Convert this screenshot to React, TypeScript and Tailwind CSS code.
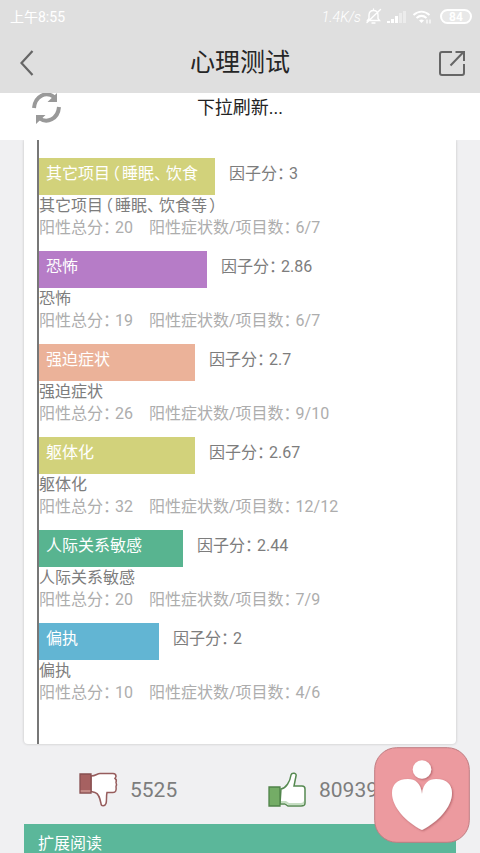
import React from "react";

type Factor = {
  label: string;
  name: string;
  score: string;
  total: number;
  ratio: string;
  bar: string;
};

const factors: Factor[] = [
  { label: "其它项目（睡眠、饮食", name: "其它项目（睡眠、饮食等）", score: "3", total: 20, ratio: "6/7", bar: "w-44 bg-[#d2d27b]" },
  { label: "恐怖", name: "恐怖", score: "2.86", total: 19, ratio: "6/7", bar: "w-[168px] bg-[#b67cc7]" },
  { label: "强迫症状", name: "强迫症状", score: "2.7", total: 26, ratio: "9/10", bar: "w-[156px] bg-[#ebb299]" },
  { label: "躯体化", name: "躯体化", score: "2.67", total: 32, ratio: "12/12", bar: "w-[156px] bg-[#d2d27b]" },
  { label: "人际关系敏感", name: "人际关系敏感", score: "2.44", total: 20, ratio: "7/9", bar: "w-36 bg-[#58b490]" },
  { label: "偏执", name: "偏执", score: "2", total: 10, ratio: "4/6", bar: "w-30 bg-[#62b5d3]" },
];

/** Sets full-width punctuation in a narrow cell so it sits close to its neighbours. */
function Txt({ children }: { children: string }) {
  return (
    <>
      {children.split(/([（）、：])/).map((part, i) =>
        /^[（）、：]$/.test(part) ? (
          <span
            key={i}
            className={`inline-block w-3 [font-feature-settings:'halt'] ${/[（）]/.test(part) ? "text-center" : "text-left"}`}
          >
            {part}
          </span>
        ) : (
          part
        ),
      )}
    </>
  );
}

function StatusBar() {
  return (
    <div className="flex h-[33px] items-center justify-between pl-[10px] pr-2 text-[14px] leading-5 text-white">
      <span>上午8:55</span>
      <div className="flex items-center gap-1">
        <span className="font-light italic">1.4K/s</span>
        <svg width="17" height="17" viewBox="0 0 17 17" fill="none" stroke="white" strokeWidth="1.4" strokeLinecap="round">
          <path d="M2.5 12.5h12l-1.500-2V7c0-3-2-4.500-4.500-4.500S4 4 4 7v3.500zM8.500 2.500V1M7 15h3M15.500 1.500 2 14.500" />
        </svg>
        <svg width="22" height="14" viewBox="0 0 22 14" fill="white">
          <path d="M1 11h3v2H1zM5 9h3v4H5zM9 6h3v7H9z" />
          <path d="M13 3h3v10h-3zM17 1h3v12h-3z" opacity=".4" />
        </svg>
        <svg width="20" height="16" viewBox="0 0 20 16" fill="none" stroke="white" strokeWidth="2">
          <path d="M1.500 6c5-4.500 11-4.500 16 0M4.500 9c3.500-3 6.500-3 10 0" />
          <path d="M7 11.500q2.500-2 5 0L9.500 14z" fill="white" stroke="none" />
          <path d="M15 10.500v4M18 10.500v4" strokeWidth="1.200" />
        </svg>
        <span className="ml-1 flex h-[15px] w-8 items-center justify-center rounded-full border-2 border-white bg-white/30 text-[12px] font-bold leading-3">
          84
        </span>
      </div>
    </div>
  );
}

function TitleBar() {
  return (
    <div className="grid h-[60px] grid-cols-[60px_1fr_60px] items-center text-[#666]">
      <button type="button" aria-label="返回" className="flex h-full items-center pl-5">
        <svg width="14" height="26" viewBox="0 0 14 26" fill="none" stroke="currentColor" strokeWidth="2.200">
          <path d="M12.500 1 1.500 13l11 12" />
        </svg>
      </button>
      <h1 className="text-center text-[25px] font-normal leading-8 text-[#262626]">心理测试</h1>
      <button type="button" aria-label="分享" className="flex h-full items-center justify-end pr-[14px]">
        <svg width="28" height="27" viewBox="0 0 28 27" fill="none" stroke="currentColor" strokeWidth="2">
          <path d="M14 2H4Q2 2 2 4v19q0 2 2 2h20q2 0 2-2v-9M12.500 15.500 25.500 2M17.500 2H26v9" />
        </svg>
      </button>
    </div>
  );
}

function PullToRefresh() {
  return (
    <div className="grid h-[47px] shrink-0 grid-cols-[60px_1fr_60px] items-start bg-white">
      <svg className="ml-8" width="29" height="31" viewBox="0 0 29 31" fill="none" stroke="#999" strokeWidth="4">
        <path d="M2 15C3 3 14-2 22 4M27 14C26 26 15 31 7 25" />
        <path d="M25 0v9h-9.500zM4 31v-9h9.500z" fill="#999" stroke="none" />
      </svg>
      <p className="pt-[3px] text-center text-[18px] leading-6 text-[#222]">下拉刷新...</p>
    </div>
  );
}

function FactorRow({ factor }: { factor: Factor }) {
  return (
    <li>
      <div className="flex h-[37px]">
        <div className={`shrink-0 overflow-hidden whitespace-nowrap pl-[7px] pt-[5px] leading-[22px] text-white ${factor.bar}`}>
          <Txt>{factor.label}</Txt>
        </div>
        <span className="whitespace-nowrap pl-[14px] pt-[5px] leading-[22px] text-[#7d7d7d]">
          <Txt>{`因子分：${factor.score}`}</Txt>
        </span>
      </div>
      <p className="leading-[22px] text-[#7d7d7d]">
        <Txt>{factor.name}</Txt>
      </p>
      <p className="flex gap-4 whitespace-nowrap leading-[21px] text-[#adadad]">
        <span><Txt>{`阳性总分：${factor.total}`}</Txt></span>
        <span><Txt>{`阳性症状数/项目数：${factor.ratio}`}</Txt></span>
      </p>
    </li>
  );
}

function Votes() {
  return (
    <div className="grid h-20 grid-cols-2 items-center pl-[54px] pt-3 text-[21px] leading-6 text-[#7d7d7d]">
      <button type="button" className="flex items-center gap-3">
        <svg width="40" height="36" viewBox="0 0 40 36">
          <path d="M13 4c5 0 6-2.500 9-2.500h13q3 0 3 3l-1 2q2 1 1 4 1 2 0 4 1 6-3 6h-6c-1 4 0 8-1 11-1 3-5 3-5 0-1-5-2-10-6-11l-4-1z" fill="white" stroke="#965c5c" strokeWidth="1.500" />
          <path d="M2 2h11v19H2z" fill="#a66161" stroke="#874f50" strokeWidth="1.300" />
          <path d="M2.700 18h9.600v2.300H2.700z" fill="#c48b87" />
        </svg>
        5525
      </button>
      <button type="button" className="flex items-center gap-3">
        <svg width="40" height="36" viewBox="0 0 40 36">
          <path d="M14 17c5-1 9-7 10-14 1-3 6-2 5 1l-2 10h8q3 0 3 3v14q0 3-4 3H21l-3-2h-5z" fill="white" stroke="#568951" strokeWidth="1.500" />
          <path d="M14 29h5l3 2h12q2 0 3-2v2q0 2-3 2H21l-3-2h-4z" fill="#c6dec3" />
          <path d="M2 15h11v19H2z" fill="#74ac66" stroke="#4f8349" strokeWidth="1.300" />
        </svg>
        80939
      </button>
    </div>
  );
}

function FloatingLogo() {
  return (
    <button type="button" aria-label="心理测试首页" className="absolute bottom-[10px] right-[10px] h-24 w-24">
      <svg width="96" height="96" viewBox="0 0 96 96">
        <defs>
          <filter id="logo-shadow" x="-20%" y="-20%" width="140%" height="140%">
            <feDropShadow dx="1" dy="1" stdDeviation="1" floodColor="#8f3f47" floodOpacity=".6" />
          </filter>
        </defs>
        <rect x=".7" y=".7" width="94.600" height="94.600" rx="22" fill="#ec9a9f" stroke="#bf7c81" strokeWidth="1" />
        <g fill="white" filter="url(#logo-shadow)">
          <circle cx="48" cy="22.500" r="9.300" />
          <path d="M48 47C47 36 41 32 34 32 23 32 18 38 18 46c0 14 14 29 30 37 16-8 30-23 30-37 0-8-5-14-16-14-7 0-13 4-14 15z" />
        </g>
      </svg>
    </button>
  );
}

export default function App() {
  return (
    <div className="relative flex h-screen flex-col overflow-hidden bg-[#f0f0f2] font-[Roboto,'Noto_Sans_CJK_SC',sans-serif] text-[16px]">
      <header className="shrink-0 bg-[#dfdfdf]">
        <StatusBar />
        <TitleBar />
      </header>
      <PullToRefresh />
      <main className="min-h-0 flex-1 overflow-hidden px-6">
        <section className="rounded-b bg-white pl-[13px] shadow-[0_0_3px_rgba(0,0,0,0.2)]">
          <ul className="flex flex-col gap-[13px] border-l-2 border-[#777] pb-[41px] pt-[18px]">
            {factors.map((factor) => (
              <FactorRow key={factor.name} factor={factor} />
            ))}
          </ul>
        </section>
        <Votes />
        <h2 className="bg-[#5bb79a] px-[14px] py-2 leading-6 text-white">扩展阅读</h2>
      </main>
      <FloatingLogo />
    </div>
  );
}
